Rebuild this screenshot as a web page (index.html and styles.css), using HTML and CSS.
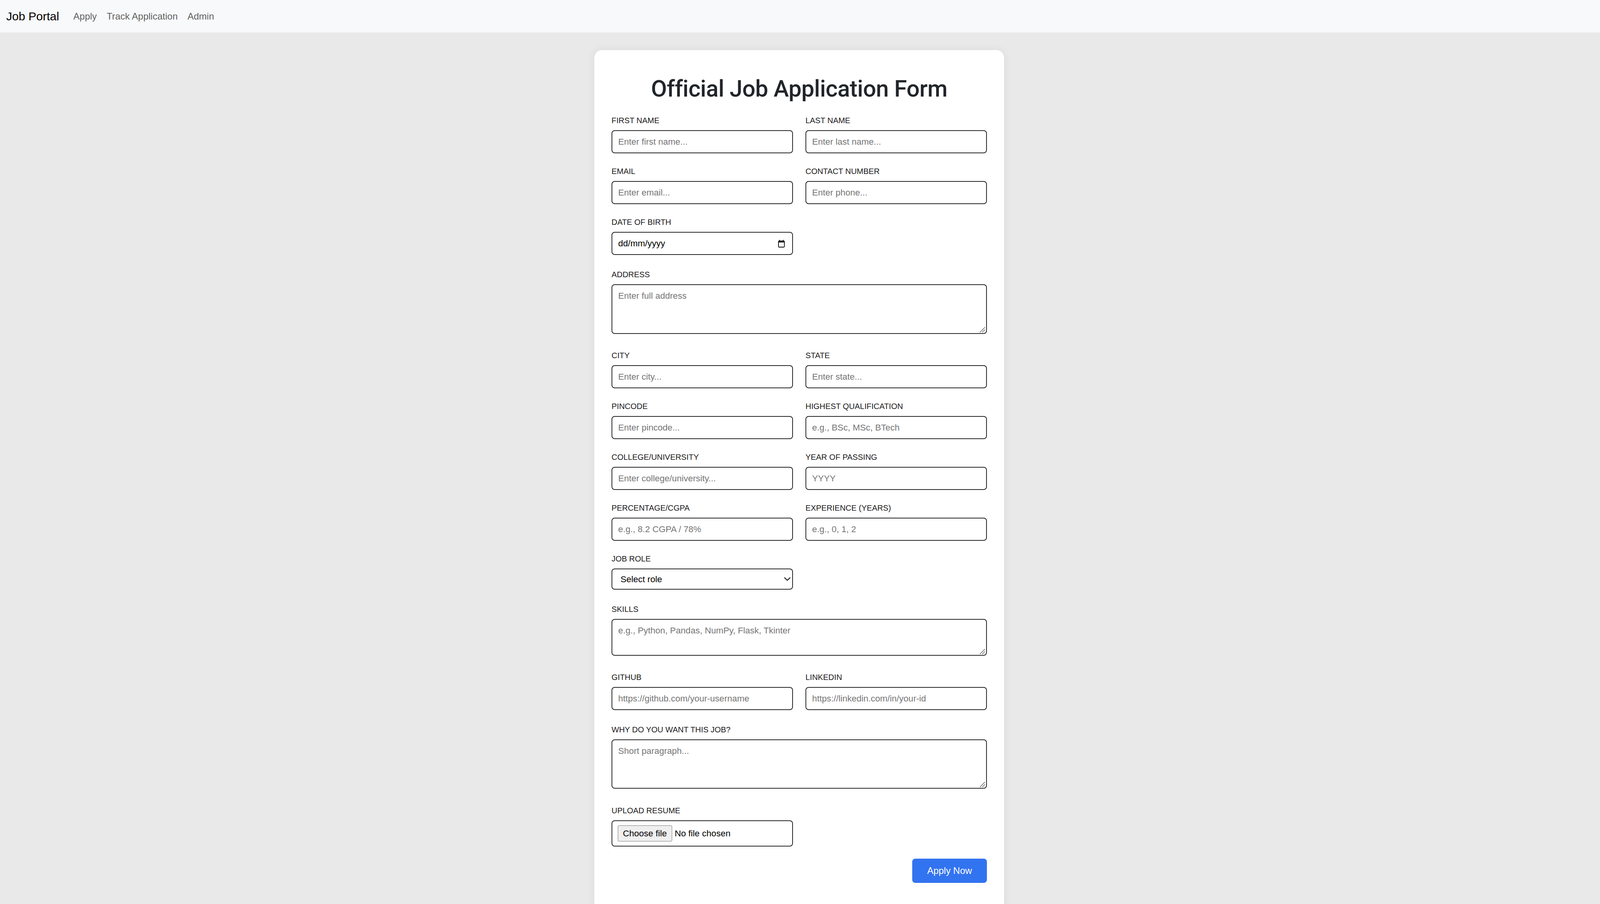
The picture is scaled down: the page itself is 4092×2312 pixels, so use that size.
FILE: index.html
```html
<!DOCTYPE html>
<html lang="en">
<head>
<meta charset="utf-8">
<title>Job Portal - Apply</title>
<link rel="stylesheet" href="styles.css">
</head>
<body>
<nav class="navbar">
  <a class="brand" href="#">Job Portal</a>
  <ul class="nav-links">
    <li><a href="#">Apply</a></li>
    <li><a href="#">Track Application</a></li>
    <li><a href="#">Admin</a></li>
  </ul>
</nav>
<main class="page">
  <section class="card">
    <h1 class="title">Official Job Application Form</h1>
    <form class="form">
      <div class="row">
        <div class="field"><label>FIRST NAME</label><input class="control" type="text" placeholder="Enter first name..."></div>
        <div class="field"><label>LAST NAME</label><input class="control" type="text" placeholder="Enter last name..."></div>
      </div>
      <div class="row">
        <div class="field"><label>EMAIL</label><input class="control" type="email" placeholder="Enter email..."></div>
        <div class="field"><label>CONTACT NUMBER</label><input class="control" type="tel" placeholder="Enter phone..."></div>
      </div>
      <div class="row loose">
        <div class="field">
          <label>DATE OF BIRTH</label>
          <div class="with-icon">
            <input class="control date" type="text" value="dd/mm/yyyy">
            <svg class="cal-icon" width="17" height="20" viewBox="0 0 17 20" aria-hidden="true">
              <rect x="1" y="3.5" width="15" height="15.5" rx="1.5" fill="none" stroke="#000" stroke-width="1.8"/>
              <rect x="1" y="3" width="15" height="4" fill="#000"/>
              <rect x="3" y="0.5" width="2" height="3" fill="#000"/>
              <rect x="12" y="0.5" width="2" height="3" fill="#000"/>
            </svg>
          </div>
        </div>
      </div>
      <div class="row full after-area">
        <div class="field">
          <label>ADDRESS</label>
          <div class="with-icon">
            <textarea class="control area-lg" placeholder="Enter full address"></textarea>
            <svg class="grip" width="15" height="15" viewBox="0 0 15 15" aria-hidden="true"><path d="M14 1 L1 14 M14 7 L7 14" stroke="#4a4a4a" stroke-width="1.3" fill="none"/></svg>
          </div>
        </div>
      </div>
      <div class="row">
        <div class="field"><label>CITY</label><input class="control" type="text" placeholder="Enter city..."></div>
        <div class="field"><label>STATE</label><input class="control" type="text" placeholder="Enter state..."></div>
      </div>
      <div class="row">
        <div class="field"><label>PINCODE</label><input class="control" type="text" placeholder="Enter pincode..."></div>
        <div class="field"><label>HIGHEST QUALIFICATION</label><input class="control" type="text" placeholder="e.g., BSc, MSc, BTech"></div>
      </div>
      <div class="row">
        <div class="field"><label>COLLEGE/UNIVERSITY</label><input class="control" type="text" placeholder="Enter college/university..."></div>
        <div class="field"><label>YEAR OF PASSING</label><input class="control" type="text" placeholder="YYYY"></div>
      </div>
      <div class="row">
        <div class="field"><label>PERCENTAGE/CGPA</label><input class="control" type="text" placeholder="e.g., 8.2 CGPA / 78%"></div>
        <div class="field"><label>EXPERIENCE (YEARS)</label><input class="control" type="text" placeholder="e.g., 0, 1, 2"></div>
      </div>
      <div class="row loose">
        <div class="field">
          <label>JOB ROLE</label>
          <div class="with-icon">
            <select class="control select">
              <option>Select role</option>
              <option>Python Developer</option>
              <option>Data Analyst</option>
            </select>
            <svg class="chevron" width="17" height="10" viewBox="0 0 17 10" aria-hidden="true">
              <polyline points="1.5,1.5 8.5,8.3 15.5,1.5" fill="none" stroke="#000" stroke-width="2" stroke-linecap="round" stroke-linejoin="round"/>
            </svg>
          </div>
        </div>
      </div>
      <div class="row full after-area">
        <div class="field">
          <label>SKILLS</label>
          <div class="with-icon">
            <textarea class="control area-sm" placeholder="e.g., Python, Pandas, NumPy, Flask, Tkinter"></textarea>
            <svg class="grip" width="15" height="15" viewBox="0 0 15 15" aria-hidden="true"><path d="M14 1 L1 14 M14 7 L7 14" stroke="#4a4a4a" stroke-width="1.3" fill="none"/></svg>
          </div>
        </div>
      </div>
      <div class="row loose">
        <div class="field"><label>GITHUB</label><input class="control" type="url" placeholder="https://github.com/your-username"></div>
        <div class="field"><label>LINKEDIN</label><input class="control" type="url" placeholder="https://linkedin.com/in/your-id"></div>
      </div>
      <div class="row full after-area-lg">
        <div class="field">
          <label>WHY DO YOU WANT THIS JOB?</label>
          <div class="with-icon">
            <textarea class="control area-md" placeholder="Short paragraph..."></textarea>
            <svg class="grip" width="15" height="15" viewBox="0 0 15 15" aria-hidden="true"><path d="M14 1 L1 14 M14 7 L7 14" stroke="#4a4a4a" stroke-width="1.3" fill="none"/></svg>
          </div>
        </div>
      </div>
      <div class="row last">
        <div class="field">
          <label>UPLOAD RESUME</label>
          <div class="control file-box">
            <label class="file-btn" for="resume">Choose file</label>
            <span class="file-name">No file chosen</span>
            <input id="resume" class="file-input" type="file">
          </div>
        </div>
      </div>
      <div class="actions">
        <button class="btn-primary" type="submit">Apply Now</button>
      </div>
    </form>
  </section>
</main>
</body>
</html>
```

FILE: styles.css
```css
html, body {
  margin: 0;
  padding: 0;
}

html {
  overflow: hidden;
}

body {
  background: #e9e9e9;
  font-family: "Liberation Sans", Arial, sans-serif;
  color: #1a1a1a;
}

/* Navbar */
.navbar {
  display: flex;
  align-items: center;
  height: 83px;
  padding-left: 16px;
  background: #f8f9fa;
}

.brand {
  font-size: 30px;
  color: #000;
  text-decoration: none;
  margin-right: 24px;
}

.nav-links {
  display: flex;
  list-style: none;
  margin: 0;
  padding: 0;
}

.nav-links a {
  display: block;
  padding: 0 12.5px;
  font-size: 24px;
  color: rgba(0, 0, 0, 0.65);
  text-decoration: none;
}

/* Card */
.page {
  padding: 45px 4px 0 0;
}

.card {
  box-sizing: border-box;
  width: 1048px;
  margin: 0 auto;
  padding: 63px 44px 72px;
  background: #fff;
  border-radius: 20px;
  box-shadow: 0 0 22px rgba(0, 0, 0, 0.07);
}

.title {
  margin: 0 0 33px;
  font-family: Roboto, "Liberation Sans", sans-serif;
  font-weight: 500;
  font-size: 59px;
  letter-spacing: -0.4px;
  line-height: 72px;
  text-align: center;
  color: #212529;
}

/* Form grid */
.row {
  display: grid;
  grid-template-columns: 1fr 1fr;
  column-gap: 32px;
  margin-bottom: 34px;
}

.row.full {
  grid-template-columns: 1fr;
}

.row.loose {
  margin-bottom: 38px;
}

.row.after-area {
  margin-bottom: 43px;
}

.row.after-area-lg {
  margin-bottom: 44px;
}

.row.last {
  margin-bottom: 0;
}

.field > label {
  display: block;
  font-size: 20.3px;
  line-height: 24px;
  margin-bottom: 13px;
  color: #1a1a1a;
}

.control {
  display: block;
  box-sizing: border-box;
  width: 100%;
  height: 59px;
  margin: 0;
  padding: 0 15px;
  border: 2px solid #262626;
  border-radius: 8px;
  background: #fff;
  font-family: "Liberation Sans", Arial, sans-serif;
  font-size: 22.5px;
  color: #000;
  outline: none;
}

.control::placeholder {
  color: #757575;
}

textarea.control {
  padding: 15px;
  line-height: normal;
  resize: none;
}

.area-lg { height: 127px; }
.area-sm { height: 94px; }
.area-md { height: 126px; }

.with-icon {
  position: relative;
}

.grip {
  position: absolute;
  right: 4px;
  bottom: 3px;
  pointer-events: none;
}

.cal-icon {
  position: absolute;
  right: 21px;
  top: 20px;
}

.select {
  height: 54px;
  padding: 0 40px 0 21px;
  appearance: none;
  -webkit-appearance: none;
}

.chevron {
  position: absolute;
  right: 6px;
  top: 22px;
  pointer-events: none;
}

/* File upload */
.file-box {
  display: flex;
  align-items: center;
  height: 67px;
  padding: 0 14px;
}

.file-btn {
  display: flex;
  align-items: center;
  box-sizing: border-box;
  height: 41px;
  padding: 0 12px;
  border: 1px solid #767676;
  border-radius: 3px;
  background: #efefef;
  font-size: 22.5px;
  color: #000;
  cursor: pointer;
}

.file-name {
  margin-left: 7px;
  font-size: 22.5px;
  color: #000;
}

.file-input {
  display: none;
}

/* Actions */
.actions {
  display: flex;
  justify-content: flex-end;
  margin-top: 31px;
}

.btn-primary {
  width: 191px;
  height: 62px;
  border: none;
  border-radius: 8px;
  background: #3273f0;
  color: #fff;
  font-family: "Liberation Sans", Arial, sans-serif;
  font-size: 24px;
  cursor: pointer;
}
```
